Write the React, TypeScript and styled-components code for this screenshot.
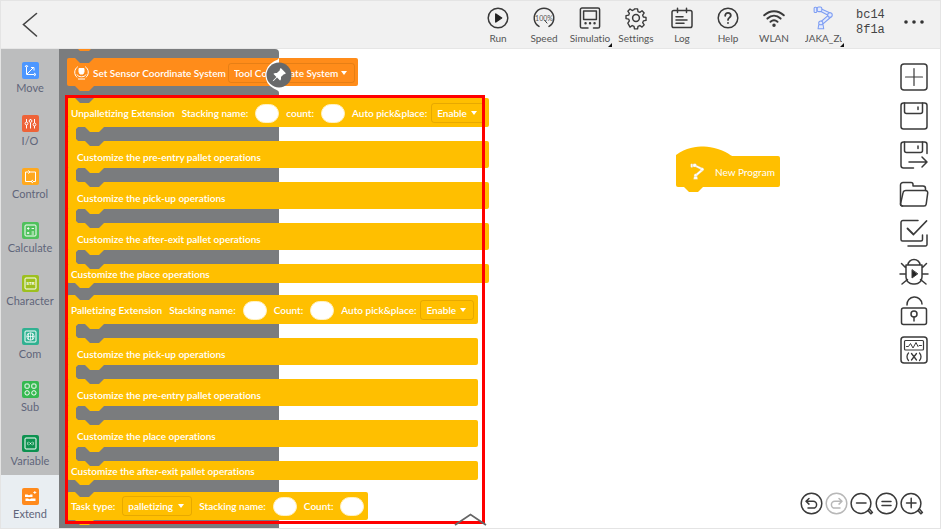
import React from 'react';
import styled, { createGlobalStyle, css } from 'styled-components';
import { BsPinAngleFill } from 'react-icons/bs';

const YELLOW = '#ffbf00';
const ORANGE = '#ff8c1a';
const GREY = '#7a7c7e';

const GlobalStyle = createGlobalStyle`
  * { box-sizing: border-box; }
  body {
    margin: 0;
    background: #fff;
    font-family: Lato, "Noto Sans", sans-serif;
    font-variant-ligatures: none;
  }
  button, input, select { font: inherit; font-variant-ligatures: none; color: inherit; }
`;

const Shell = styled.div`
  height: 100vh;
  display: flex;
  flex-direction: column;
  border: 1px solid #e4e4e4;
  overflow: hidden;
  background: #fff;
`;

const PlainButton = styled.button`
  border: 0;
  padding: 0;
  background: none;
  cursor: pointer;
  svg { display: block; }
`;

/* ---------- top bar ---------- */

const TopBar = styled.header`
  position: relative;
  z-index: 3;
  flex: none;
  height: 48px;
  display: flex;
  align-items: flex-start;
  background: #f1f1f1;
  border-bottom: 1px solid #e6e6e6;
  color: #555;
`;

const BackButton = styled(PlainButton)`
  margin: 9px auto 0 20px;
`;

const ToolItem = styled(PlainButton)<{ $wide?: boolean; $menu?: boolean }>`
  position: relative;
  width: ${p => (p.$wide ? 52 : 46)}px;
  padding-top: 5px;
  display: flex;
  flex-direction: column;
  align-items: center;
  gap: 1px;
  font-size: 10px;
  line-height: 14px;
  ${p => p.$menu && css`
    &::after {
      content: '';
      position: absolute;
      right: ${p.$wide ? 5 : 1}px;
      bottom: -2px;
      border-left: 4px solid transparent;
      border-bottom: 4px solid #111;
    }
  `}
`;

const ClippedName = styled.span`
  width: 37px;
  overflow: hidden;
  white-space: nowrap;
  text-align: left;
`;

const SerialCode = styled.div`
  width: 38px;
  padding: 7px 0 0 7px;
  font: 12px/15px "Liberation Mono", monospace;
  color: #444;
`;

const MoreButton = styled(PlainButton)`
  margin: 18px 15px 0 16px;
`;

/* ---------- main area ---------- */

const Main = styled.main`
  flex: 1;
  min-height: 0;
  display: flex;
`;

const Sidebar = styled.nav`
  flex: none;
  width: 58px;
  display: flex;
  flex-direction: column;
  background: #bcbdbe;
`;

const Category = styled(PlainButton)<{ $active?: boolean }>`
  flex: 1;
  padding-top: 13px;
  display: flex;
  flex-direction: column;
  align-items: center;
  gap: 1px;
  font-size: 11px;
  line-height: 15px;
  color: #5f657a;
  background: ${p => (p.$active ? '#e9eef2' : 'transparent')};
`;

const CategoryIcon = styled.svg<{ $color: string }>`
  width: 17px;
  height: 17px;
  border-radius: 2px;
  background: ${p => p.$color};
  fill: none;
  stroke: #fff;
  stroke-width: 1;
`;

const Flyout = styled.section`
  position: relative;
  z-index: 2;
  flex: none;
  width: 220px;
  background: ${GREY};
  border-top-right-radius: 4px;
`;

const BlockList = styled.div`
  position: relative;
  width: max-content;
  margin-top: -11px;
  padding-left: 8px;
  display: flex;
  flex-direction: column;
  align-items: flex-start;
  gap: 12px;
  font-size: 10px;
  font-weight: 600;
  line-height: 14px;
  color: #fff;
`;

const notch = css`
  content: '';
  position: absolute;
  z-index: 1;
  width: 19px;
  height: 5px;
  clip-path: polygon(0 0, 100% 0, 14px 100%, 5px 100%);
`;

const Block = styled.div<{ $color?: string }>`
  position: relative;
  border-radius: 2px;
  background: ${p => p.$color};
  &::before { ${notch} left: 8px; top: 0; background: ${GREY}; }
  &::after { ${notch} left: 8px; top: 100%; background: ${p => p.$color ?? YELLOW}; }
`;

const HiddenBlock = styled(Block)`
  width: 120px;
  height: 8px;
`;

const BlockRow = styled.div<{ $h: number }>`
  height: ${p => p.$h}px;
  padding: 0 4px;
  display: flex;
  align-items: center;
  gap: 7px;
  border-radius: 2px;
  white-space: nowrap;
`;

const HeadRow = styled(BlockRow)`
  background: ${YELLOW};
  padding-top: 1px;
`;

const BranchRow = styled(HeadRow)`
  padding: 4px 10px 0;
`;

const Pair = styled.div`
  display: flex;
  align-items: center;
  gap: 4px;
`;

const Slot = styled.div`
  position: relative;
  height: 14px;
  border-left: 9px solid ${YELLOW};
  background:
    linear-gradient(135deg, ${YELLOW} 1px, transparent 2px),
    linear-gradient(45deg, ${YELLOW} 1px, transparent 2px);
  &::before { ${notch} left: 9px; top: 0; background: ${YELLOW}; }
  &::after { ${notch} left: 9px; top: 100%; background: ${GREY}; }
`;

const SensorRow = styled(BlockRow)`
  padding: 1px 3px 0 7px;
  gap: 2px;
  svg { margin-right: 2px; }
`;

const NumberInput = styled.input`
  width: 24px;
  height: 19px;
  padding: 0 5px;
  border: 1px solid #fff2c4;
  border-radius: 10px;
  background: #fff;
  color: #575e75;
  text-align: center;
`;

const SelectWrap = styled.span<{ $w: number }>`
  position: relative;
  width: ${p => p.$w}px;
  height: 20px;
  select {
    appearance: none;
    width: 100%;
    height: 100%;
    padding: 0 0 0 5px;
    border: 1px solid rgba(120, 70, 0, 0.18);
    border-radius: 3px;
    background: transparent;
    outline: none;
  }
  option { color: #333; }
  &::after {
    content: '';
    position: absolute;
    right: 8px;
    top: 8px;
    border: 3px solid transparent;
    border-top: 4px solid #fff;
    border-bottom: 0;
    pointer-events: none;
  }
`;

const Highlight = styled.div`
  position: absolute;
  z-index: 3;
  left: 6px;
  top: 57px;
  width: 420px;
  height: 429px;
  border: 3px solid #f00;
  pointer-events: none;
`;

const PinButton = styled(PlainButton)`
  position: absolute;
  z-index: 4;
  right: -13px;
  top: 7px;
  color: #fff;
`;

/* ---------- canvas ---------- */

const Canvas = styled.section`
  position: relative;
  flex: 1;
  display: flex;
  flex-direction: column;
  justify-content: space-between;
  align-items: flex-end;
`;

const SideTools = styled.div`
  padding: 13px 11px 0 0;
  display: flex;
  flex-direction: column;
  gap: 9px;
`;

const ZoomTools = styled.div`
  padding: 0 16px 12px 0;
  display: flex;
`;

const LineIcon = styled.svg<{ $faded?: boolean }>`
  fill: none;
  stroke: ${p => (p.$faded ? '#b8b8b8' : '#3a3a3a')};
  stroke-width: 1.5;
  stroke-linecap: round;
  stroke-linejoin: round;
`;

const HatBlock = styled.div`
  position: absolute;
  left: 397px;
  top: 107px;
  height: 31px;
  padding: 0 5px 0 14px;
  display: flex;
  align-items: center;
  gap: 10px;
  border-radius: 2px;
  background: ${YELLOW};
  color: #fff;
  font-size: 10px;
  line-height: 14px;
  &::after { ${notch} left: 8px; top: 100%; background: ${YELLOW}; }
`;

const HatCap = styled.svg`
  position: absolute;
  left: 0;
  bottom: 29px;
`;

const ScrollUp = styled(PlainButton)`
  position: absolute;
  z-index: 4;
  left: 175px;
  bottom: 2px;
`;

/* ---------- drawings ---------- */

const RobotArm = ({ w, h, stroke, fill, line }: {
  w: number; h: number; stroke: string; fill: string; line: number;
}) => (
  <svg width={w} height={h} viewBox="0 0 20 23" fill={fill} stroke={stroke} strokeWidth={line} strokeLinejoin="round">
    <path d="M7 2.400l10 4.600-1.200 2.600-8.800-4.600z" />
    <path d="M14.500 9l2.400 1.800L9 17.600l-2.400-1.800z" />
    <rect x="1" y="1.200" width="2.600" height="5" rx="1" />
    <rect x="4" y="1" width="4.400" height="4.400" rx="1.400" />
    <circle cx="16.200" cy="8.600" r="2.200" />
    <circle cx="7.400" cy="16.400" r="2" />
    <path d="M5.400 18h4.200l.6 3.800H4.800z" />
  </svg>
);

const toolIcons: Record<string, React.ReactNode> = {
  Run: <><circle cx="12" cy="12" r="9.800" /><path d="M9.800 8v8l5.800-4z" fill="#222" stroke="#222" /></>,
  Speed: (
    <>
      <path d="M7 20.400A9.800 9.800 0 1 1 17 20.400" />
      <text x="12" y="14.600" textAnchor="middle" fontSize="7" fill="#555" stroke="none">100%</text>
      <path d="M12.800 14.500l2.200 2.600" strokeWidth="1" />
    </>
  ),
  Simulatio: (
    <>
      <path d="M10 22H4a1.600 1.600 0 0 1-1.600-1.600V3.600A1.600 1.600 0 0 1 4 2h16a1.600 1.600 0 0 1 1.600 1.600V20.400A1.600 1.600 0 0 1 20 22h-4.500" />
      <rect x="5.600" y="5" width="12.800" height="8.500" />
      <path d="M7.500 17.200h.1M12 17.200h.1M16.500 17.200h.1" strokeWidth="2.400" />
    </>
  ),
  Settings: (
    <>
      <circle cx="12" cy="12" r="3.400" />
      <path d="M10.300 2h3.400l.5 2.900 2 .85 2.400-1.700 2.400 2.400-1.700 2.400.8 2 2.900.5v3.300l-2.900.5-.8 2 1.700 2.400-2.400 2.400-2.400-1.700-2 .85-.5 2.900h-3.400l-.5-2.900-2-.85-2.400 1.700L3 17.550l1.700-2.400-.8-2-2.900-.5V9.350l2.900-.5.8-2L3 4.450l2.400-2.400 2.400 1.700 2-.85z" transform="translate(1.100 1.100) scale(.91)" />
    </>
  ),
  Log: (
    <>
      <rect x="2" y="4.500" width="20" height="17" rx="1.800" />
      <path d="M7.500 2.200v4.300M16.500 2.200v4.300M6 10.800h7M6 14h11M6 17.200h8" />
    </>
  ),
  Help: (
    <>
      <circle cx="12" cy="12" r="9.800" />
      <path d="M9.200 9.800c0-1.900 1.200-2.900 2.800-2.900s2.800 1 2.800 2.600c0 2-2.800 2.200-2.800 4.400M12 16.800v.2" strokeWidth="1.800" />
    </>
  ),
  WLAN: (
    <>
      <path d="M2.200 9.200c5.800-5.400 13.800-5.400 19.600 0M5.400 12.600c4-3.700 9.200-3.700 13.200 0M8.500 15.800c2.200-1.900 4.800-1.900 7 0" strokeWidth="2" />
      <circle cx="12" cy="19.300" r="1" fill="#333" />
    </>
  ),
};

const categories: { name: string; color: string; art: React.ReactNode }[] = [
  { name: 'Move', color: '#4c97ff', art: <><path d="M4.500 4.500v8h8M5 12l6-6M9 5.500h3v3" /><path d="M3 5l1.500-2L6 5M12 11l2 1.500-2 1.500" /></> },
  { name: 'I/O', color: '#ee6338', art: <><path d="M4.500 4v3M4.500 10v3.500M8.500 8v5.500M8.500 4v1M12.500 4v4M12.500 11v2.500" /><circle cx="4.500" cy="8.500" r="1.400" /><circle cx="8.500" cy="6" r="1.400" /><circle cx="12.500" cy="9.500" r="1.400" /></> },
  { name: 'Control', color: '#ffa91f', art: <><path d="M6 4H3.500v9.500H10M11 13.500h2.500V4H7" /><path d="M6 2.500L8 4 6 5.500M11 12l-2 1.500 2 1.500" /></> },
  { name: 'Calculate', color: '#4fc15c', art: <><rect x="3" y="3" width="11" height="11" rx="1" /><path d="M5 6.500h2.500M6.300 5.200v2.600M9.600 6.500H12M5.200 10l2 2M7.200 10l-2 2M9.600 10h2.400M9.600 12H12" strokeWidth=".9" /></> },
  { name: 'Character', color: '#9dc01f', art: <><rect x="3" y="3" width="11" height="11" rx="1" /><text x="8.500" y="10.200" textAnchor="middle" fontSize="4.500" fontWeight="900" fill="#fff" stroke="none">STR</text></> },
  { name: 'Com', color: '#30b191', art: <><rect x="3" y="3" width="11" height="11" rx="1" /><circle cx="8.500" cy="8.500" r="3.700" strokeWidth=".8" /><path d="M8.500 4.800v7.400M4.800 8.500h7.400M6.500 5.500v6M10.500 5.500v6" strokeWidth=".7" /></> },
  { name: 'Sub', color: '#35b950', art: <><rect x="3" y="3" width="4.200" height="4.200" rx="1" /><rect x="9.800" y="3" width="4.200" height="4.200" rx="1" /><circle cx="5.100" cy="11.900" r="2.200" /><circle cx="11.900" cy="11.900" r="2.200" /></> },
  { name: 'Variable', color: '#0d9250', art: <><rect x="3" y="3" width="11" height="11" rx="1" /><path d="M6.300 6.800c-.8 1-.8 2.400 0 3.400M10.700 6.800c.8 1 .8 2.400 0 3.400M7.600 7.500l1.800 2M9.400 7.500l-1.800 2" strokeWidth=".8" /></> },
  { name: 'Extend', color: '#ff8a1c', art: <><path d="M3 6.500h2.500c1 1 2 1 3 0h2v2.500H3z" fill="#fff" stroke="none" /><path d="M3.500 10.500h2.500c1 1 2 1 3 0h4.500v2.500h-10z" fill="#fff" stroke="none" /><path d="M12.800 3v3M11.300 4.500h3" strokeWidth=".9" /></> },
];

const sideIcons: { name: string; art: React.ReactNode }[] = [
  { name: 'New', art: <><rect x="2" y="2" width="26" height="26" rx="3" /><path d="M15 6.500v17M6.500 15h17" strokeWidth="1.200" /></> },
  { name: 'Save', art: <><path d="M4.500 2h21A2.500 2.500 0 0 1 28 4.500v21a2.500 2.500 0 0 1-2.500 2.500h-21A2.500 2.500 0 0 1 2 25.500v-21A2.500 2.500 0 0 1 4.500 2z" /><path d="M5.500 2v8.500a2 2 0 0 0 2 2h14a2 2 0 0 0 2-2V2M19 6v2.500" /></> },
  { name: 'Save as', art: <><path d="M14.500 28h-10A2.500 2.500 0 0 1 2 25.500v-21A2.500 2.500 0 0 1 4.500 2h21A2.500 2.500 0 0 1 28 4.500v9" /><path d="M5.500 2v8.500a2 2 0 0 0 2 2h14a2 2 0 0 0 2-2V2M19 6v2.500M10 22h17.500M23 17l5 5-5 5" /></> },
  { name: 'Open', art: <><path d="M3.500 27A2 2 0 0 1 1.500 25V6a2.500 2.500 0 0 1 2.500-2.500h8a2 2 0 0 1 2 2v1.500h10a2.500 2.500 0 0 1 2.500 2.500v2" /><path d="M7.500 11.500h19a2.200 2.200 0 0 1 2.200 2.600l-1.500 11a2.200 2.200 0 0 1-2.200 1.900H3.600a2 2 0 0 1-2-2.400l2.400-10.700a3 3 0 0 1 3.500-2.400z" /></> },
  { name: 'Check', art: <><path d="M19 2.500H4A2 2 0 0 0 2 4.500v17A1.500 1.500 0 0 0 3.500 23H22a1.500 1.500 0 0 0 1.500-1.500V17M28 17v9.500A1.500 1.500 0 0 1 26.500 28H9" /><path d="M8.500 10.500l6 6 13-13.500" strokeWidth="1.800" /></> },
  { name: 'Debug', art: <><path d="M7 8h16v12a7 7 0 0 1-7 7h-2a7 7 0 0 1-7-7zM9 8a6 5.500 0 0 1 12 0M7 11L2.500 6.500M23 11l4.500-4.500M7 17H1M23 17h6M8.500 22.500L3 27M21.500 22.500L27 27" /><path d="M13 13v8l5.500-4z" fill="#222" strokeWidth="1" /></> },
  { name: 'Unlock', art: <><rect x="2.500" y="12" width="25" height="16.500" rx="2" /><path d="M8 9a7.500 7.500 0 0 1 15-1" /><circle cx="15" cy="18" r="3" /><path d="M15 21v4" /></> },
  { name: 'Variables', art: <><rect x="2" y="2" width="26" height="26" rx="3" /><rect x="5.500" y="5.500" width="19" height="9.500" rx="1" strokeWidth="1.200" /><path d="M7.500 11.500h2l2-3 2.500 4.500 3-5.500 2 4 1-1h2.500" strokeWidth="1" /><path d="M9.500 18c-2 2-2 5.500 0 7.500M20.500 18c2 2 2 5.500 0 7.500M12.500 18.500l5 6.500M17.500 18.500l-5 6.500" strokeWidth="1.300" /></> },
];

const zoomIcons: { name: string; faded?: boolean; art: React.ReactNode }[] = [
  { name: 'Undo', art: <><circle cx="12.500" cy="12.500" r="10.300" /><path d="M10 7.500L7 10.300l3 2.800M7.500 10.300h6.700a3.400 3.400 0 0 1 0 6.800H9" /></> },
  { name: 'Redo', faded: true, art: <><circle cx="12.500" cy="12.500" r="10.300" /><path d="M15 7.500l3 2.800-3 2.800M17.500 10.300h-6.700a3.400 3.400 0 0 0 0 6.800H16" /></> },
  { name: 'Zoom out', art: <><circle cx="12" cy="12.500" r="9.900" /><path d="M7.500 12h9.500M19 19.500l1.600-1.300 2.800 3.300-1.600 1.300z" /></> },
  { name: 'Reset zoom', art: <><circle cx="12.500" cy="12.500" r="10.300" /><path d="M8 10.500h9M8 14.500h9" /></> },
  { name: 'Zoom in', art: <><circle cx="12" cy="12.500" r="9.900" /><path d="M7.500 12h9.500M12.200 7.300v9.500M19 19.500l1.600-1.300 2.800 3.300-1.600 1.300z" /></> },
];

/* ---------- block parts ---------- */

function NumberField({ label }: { label: string }) {
  const id = React.useId();
  return (
    <>
      <label htmlFor={id}>{label}</label>
      <NumberInput id={id} type="text" />
    </>
  );
}

function Dropdown({ name, options, width }: { name: string; options: string[]; width: number }) {
  return (
    <SelectWrap $w={width}>
      <select aria-label={name}>
        {options.map(o => <option key={o}>{o}</option>)}
      </select>
    </SelectWrap>
  );
}

function StackBlock({ title, countLabel, branches, last }: {
  title: string; countLabel: string; branches: string[]; last: string;
}) {
  return (
    <Block>
      <HeadRow $h={29}>
        <span>{title}</span>
        <NumberField label="Stacking name:" />
        <NumberField label={countLabel} />
        <Pair>
          <span>Auto pick&amp;place:</span>
          <Dropdown name="Auto pick and place" options={['Enable', 'Disable']} width={54} />
        </Pair>
      </HeadRow>
      {branches.map(b => (
        <React.Fragment key={b}>
          <Slot />
          <BranchRow $h={27}>{b}</BranchRow>
        </React.Fragment>
      ))}
      <Slot />
      <HeadRow $h={19}>{last}</HeadRow>
    </Block>
  );
}

export default function App() {
  return (
    <Shell>
      <GlobalStyle />
      <TopBar>
        <BackButton aria-label="Back">
          <svg width="18" height="28" viewBox="0 0 18 28" fill="none" stroke="#444" strokeWidth="1.600" strokeLinecap="round"><path d="M15.500 3.500L2.500 14.500 15.500 26" /></svg>
        </BackButton>
        {Object.entries(toolIcons).map(([name, art]) => (
          <ToolItem key={name} $menu={name === 'Simulatio'}>
            <LineIcon width="24" height="24" viewBox="0 0 24 24">{art}</LineIcon>
            {name}
          </ToolItem>
        ))}
        <ToolItem $wide $menu>
          <RobotArm w={21} h={24} stroke="#7d9df3" fill="#e3eafc" line={1} />
          <ClippedName>JAKA_Zu</ClippedName>
        </ToolItem>
        <SerialCode>bc14<br />8f1a</SerialCode>
        <MoreButton aria-label="More">
          <svg width="22" height="6" viewBox="0 0 22 6" fill="#333"><circle cx="3" cy="3" r="1.800" /><circle cx="11" cy="3" r="1.800" /><circle cx="19" cy="3" r="1.800" /></svg>
        </MoreButton>
      </TopBar>

      <Main>
        <Sidebar>
          {categories.map(c => (
            <Category key={c.name} $active={c.name === 'Extend'}>
              <CategoryIcon viewBox="0 0 17 17" $color={c.color}>{c.art}</CategoryIcon>
              {c.name}
            </Category>
          ))}
        </Sidebar>

        <Flyout>
          <BlockList>
            <HiddenBlock $color={ORANGE} />
            <Block $color={ORANGE}>
              <SensorRow $h={28}>
                <svg width="15" height="15" viewBox="0 0 15 15" fill="none" stroke="#fff" strokeWidth="1">
                  <path d="M3.800 1.700a6.600 6.600 0 0 0-.5 10.800M11.200 1.700a6.600 6.600 0 0 1 .5 10.800M4 14h7" />
                  <path d="M5 3.500h5v3.500l-1 2H6L5 7z" fill="#fff" />
                  <path d="M3 9.500c1 3 8 3 9 0" />
                </svg>
                <span>Set Sensor Coordinate System</span>
                <Dropdown name="Coordinate system" options={['Tool Coordinate System']} width={127} />
              </SensorRow>
            </Block>
            <StackBlock
              title="Unpalletizing Extension"
              countLabel="count:"
              branches={[
                'Customize the pre-entry pallet operations',
                'Customize the pick-up operations',
                'Customize the after-exit pallet operations',
              ]}
              last="Customize the place operations"
            />
            <StackBlock
              title="Palletizing Extension"
              countLabel="Count:"
              branches={[
                'Customize the pick-up operations',
                'Customize the pre-entry pallet operations',
                'Customize the place operations',
              ]}
              last="Customize the after-exit pallet operations"
            />
            <Block $color={YELLOW}>
              <BlockRow $h={28}>
                <span>Task type:</span>
                <Dropdown name="Task type" options={['palletizing', 'unpalletizing']} width={70} />
                <NumberField label="Stacking name:" />
                <NumberField label="Count:" />
              </BlockRow>
            </Block>
            <Highlight />
          </BlockList>
          <PinButton aria-label="Pin panel">
            <svg width="30" height="38" viewBox="0 0 30 38">
              <path d="M17 1c0 3-3 3-6 5a15 15 0 0 0 0 26c3 2 6 2 6 5V19z" fill="#fff" />
              <circle cx="17" cy="19" r="12.500" fill="#68696b" />
              <BsPinAngleFill x="9.500" y="11.500" size="15" />
            </svg>
          </PinButton>
        </Flyout>

        <Canvas>
          <HatBlock>
            <HatCap width="57" height="12" viewBox="0 0 57 12" fill={YELLOW}>
              <path d="M0 12V9C10 1.500 20 .5 28 .5S48 4 55 9.500c1 .5 2 .5 2 .5v2z" />
            </HatCap>
            <RobotArm w={15} h={23} stroke="#d8cdb0" fill="#fff" line={0.4} />
            New Program
          </HatBlock>
          <SideTools>
            {sideIcons.map(i => (
              <PlainButton key={i.name} aria-label={i.name}>
                <LineIcon width="30" height="30" viewBox="0 0 30 30">{i.art}</LineIcon>
              </PlainButton>
            ))}
          </SideTools>
          <ScrollUp aria-label="Expand">
            <svg width="34" height="13" viewBox="0 0 34 13" fill="none" stroke="#666" strokeWidth="1.800"><path d="M1 12L16.500 1.500 32 12" /></svg>
          </ScrollUp>
          <ZoomTools>
            {zoomIcons.map(i => (
              <PlainButton key={i.name} aria-label={i.name}>
                <LineIcon width="25" height="25" viewBox="0 0 25 25" $faded={i.faded}>{i.art}</LineIcon>
              </PlainButton>
            ))}
          </ZoomTools>
        </Canvas>
      </Main>
    </Shell>
  );
}
